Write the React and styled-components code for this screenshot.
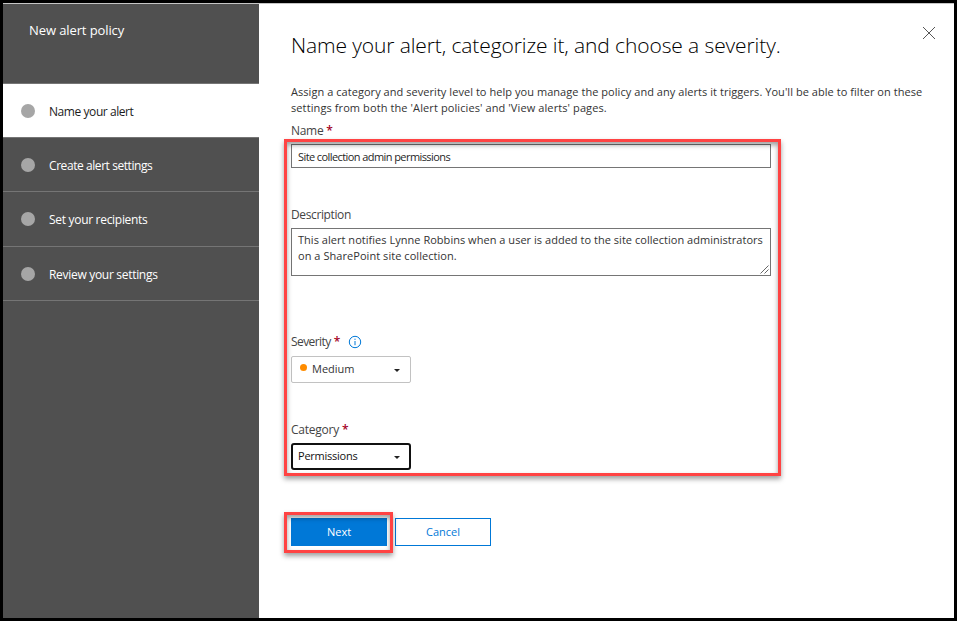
import React from "react";
import styled, { createGlobalStyle } from "styled-components";

const GlobalStyle = createGlobalStyle`
  * { box-sizing: border-box; }
  body { margin: 0; background: #000; font-family: "Open Sans", "Noto Sans", sans-serif; }
  button, input, textarea { font-family: inherit; }
`;

const Frame = styled.div`
  position: relative;
  width: 957px;
  height: 621px;
  padding: 3px;
  background: #000;
  overflow: hidden;
`;

const Dialog = styled.div`
  display: flex;
  height: 615px;
  border-top: 1px solid #c6c6c6;
  background: #fff;
`;

const Sidebar = styled.nav`
  flex: none;
  width: 256px;
  background: #505050;
`;

const SidebarTitle = styled.div`
  height: 80px;
  padding: 16px 0 0 26px;
  border-bottom: 1px solid #757575;
  color: #fff;
  font-size: 13px;
  line-height: 20px;
  letter-spacing: -0.1px;
  white-space: nowrap;
`;

const Step = styled.div`
  display: flex;
  align-items: flex-start;
  height: ${(p) => p.$height}px;
  padding: 20px 0 0 18px;
  border-bottom: 1px solid #757575;
  background: ${(p) => (p.$active ? "#fff" : "#505050")};
  color: ${(p) => (p.$active ? "#1c1c1c" : "#fff")};
`;

const Dot = styled.span`
  width: 14px;
  height: 14px;
  border-radius: 50%;
  background: #a6a6a6;
`;

const StepLabel = styled.span`
  margin-left: 14px;
  font-size: 12px;
  line-height: 16px;
  letter-spacing: ${(p) => p.$spacing}px;
  white-space: nowrap;
`;

const Main = styled.main`
  display: flex;
  flex: 1;
  align-items: flex-start;
  justify-content: space-between;
  padding: 0 19px 0 32px;
`;

const Form = styled.div`
  display: flex;
  flex-direction: column;
  width: 632px;
`;

const Title = styled.h1`
  height: 30px;
  margin: 26px 0 0;
  color: #000;
  font-size: 21px;
  font-weight: 300;
  line-height: 30px;
  letter-spacing: -0.11px;
  white-space: nowrap;
`;

const Intro = styled.p`
  height: 32px;
  margin: 24px 0 7px;
  color: #333;
  font-size: 11px;
  line-height: 16px;
  white-space: nowrap;
`;

const Line = styled.span`
  display: block;
  letter-spacing: ${(p) => p.$spacing}px;
`;

const Field = styled.div`
  display: flex;
  flex-direction: column;
  align-items: flex-start;
  height: ${(p) => p.$height}px;
`;

const Label = styled.label`
  display: flex;
  align-items: center;
  height: 16px;
  margin-bottom: ${(p) => p.$gap}px;
  color: #444;
  font-size: 12px;
  line-height: 16px;
  letter-spacing: ${(p) => p.$spacing}px;
`;

const Required = styled.span`
  margin-left: 3px;
  color: #a4001d;
  font-weight: 600;
`;

const InfoIcon = styled.svg`
  width: 14px;
  height: 14px;
  margin-left: 8px;
`;

const TextInput = styled.input`
  width: 480px;
  height: 24px;
  padding: 0 6px;
  border: 1px solid #757575;
  outline: none;
  color: #1f1f1f;
  font-size: 11px;
  letter-spacing: -0.58px;
`;

const TextBox = styled.div`
  display: flex;
  width: 480px;
  height: 48px;
  padding: 3px 0 0 6px;
  border: 1px solid #757575;
  color: #333;
  font-size: 11px;
  line-height: 16px;
  white-space: nowrap;
`;

const TextBoxLines = styled.div`
  flex: 1;
`;

const Grip = styled.svg`
  align-self: flex-end;
  flex: none;
  width: 9px;
  height: 9px;
  margin: 0 1px 1px -10px;
`;

const Select = styled.button`
  display: flex;
  align-items: center;
  width: 120px;
  height: 27px;
  padding: 0 ${(p) => (p.$focused ? 8 : 9)}px 1px ${(p) => (p.$focused ? 5 : 8)}px;
  border: ${(p) => (p.$focused ? "2px solid #111" : "1px solid #c2c2c2")};
  border-radius: ${(p) => (p.$focused ? 3 : 2)}px;
  background: #fff;
  color: ${(p) => (p.$focused ? "#111" : "#333")};
  font-size: 11px;
  line-height: 16px;
  letter-spacing: ${(p) => p.$spacing}px;
`;

const SeverityDot = styled.span`
  width: 7px;
  height: 7px;
  margin: -3px 5px 0 0;
  border-radius: 50%;
  background: #ff8c00;
`;

const Caret = styled.svg`
  width: 6px;
  height: 3px;
  margin: 2px 1px 0 auto;
`;

const Actions = styled.div`
  display: flex;
  gap: 8px;
`;

const Button = styled.button`
  width: 96px;
  height: 28px;
  padding: 0 0 1px;
  border: 1px solid #0078d7;
  background: ${(p) => (p.$primary ? "#0078d7" : "#fff")};
  color: ${(p) => (p.$primary ? "#fff" : "#0078d7")};
  font-size: 11px;
  line-height: 16px;
`;

const CloseButton = styled.button`
  display: flex;
  margin-top: 23px;
  padding: 0;
  border: 0;
  background: none;
`;

/* Red callout rectangles drawn over the form. */
const Callout = styled.div`
  position: absolute;
  left: 284px;
  top: ${(p) => p.$top}px;
  width: ${(p) => p.$width}px;
  height: ${(p) => p.$height}px;
  border: 3px solid #ff4343;
  box-shadow: 0 3px 5px rgba(0, 0, 0, 0.38), inset 0 3px 5px rgba(0, 0, 0, 0.38);
  pointer-events: none;
`;

const steps = [
  { label: "Name your alert", height: 54, active: true, spacing: -0.43 },
  { label: "Create alert settings", height: 54, spacing: -0.43 },
  { label: "Set your recipients", height: 55, spacing: -0.3 },
  { label: "Review your settings", height: 54, spacing: -0.3 },
];

const DropCaret = () => (
  <Caret viewBox="0 0 6 3">
    <path d="M0 0H6L3 3Z" fill="#222" />
  </Caret>
);

export default function App() {
  return (
    <>
      <GlobalStyle />
      <Frame>
        <Dialog>
          <Sidebar>
            <SidebarTitle>New alert policy</SidebarTitle>
            {steps.map((s) => (
              <Step key={s.label} $height={s.height} $active={s.active}>
                <Dot />
                <StepLabel $spacing={s.spacing}>{s.label}</StepLabel>
              </Step>
            ))}
          </Sidebar>
          <Main>
            <Form>
              <Title>Name your alert, categorize it, and choose a severity.</Title>
              <Intro>
                <Line $spacing={0.05}>
                  Assign a category and severity level to help you manage the policy and any alerts it triggers. You'll be able to filter on these
                </Line>
                <Line $spacing={0.1}>settings from both the 'Alert policies' and 'View alerts' pages.</Line>
              </Intro>
              <Field $height={84}>
                <Label $gap={5} $spacing={-0.3}>
                  Name<Required>*</Required>
                </Label>
                <TextInput defaultValue="Site collection admin permissions" />
              </Field>
              <Field $height={127}>
                <Label $gap={5} $spacing={-0.38}>Description</Label>
                <TextBox>
                  <TextBoxLines>
                    <Line $spacing={0.03}>This alert notifies Lynne Robbins when a user is added to the site collection administrators</Line>
                    <Line $spacing={0.05}>on a SharePoint site collection.</Line>
                  </TextBoxLines>
                  <Grip viewBox="0 0 9 9">
                    <path d="M0.5 8.5L8.5 0.5M4.5 8.5L8.5 4.5" stroke="#666" fill="none" />
                  </Grip>
                </TextBox>
              </Field>
              <Field $height={88}>
                <Label $gap={6} $spacing={-0.58}>
                  Severity<Required>*</Required>
                  <InfoIcon viewBox="0 0 14 14">
                    <circle cx="7" cy="7" r="5.7" fill="none" stroke="#0078d7" />
                    <path d="M7 6V10.2M7 3.7V4.9" stroke="#0078d7" />
                  </InfoIcon>
                </Label>
                <Select $spacing={0}>
                  <SeverityDot />
                  Medium
                  <DropCaret />
                </Select>
              </Field>
              <Field $height={96}>
                <Label $gap={5} $spacing={-0.25}>
                  Category<Required>*</Required>
                </Label>
                <Select $focused $spacing={-0.24}>
                  Permissions
                  <DropCaret />
                </Select>
              </Field>
              <Actions>
                <Button $primary>Next</Button>
                <Button>Cancel</Button>
              </Actions>
            </Form>
            <CloseButton aria-label="Close">
              <svg width="12" height="12" viewBox="0 0 12 12">
                <path d="M0 0L12 12M12 0L0 12" stroke="#444" strokeWidth="0.9" />
              </svg>
            </CloseButton>
          </Main>
        </Dialog>
        <Callout $top={139} $width={497} $height={337} />
        <Callout $top={512} $width={109} $height={41} />
      </Frame>
    </>
  );
}
